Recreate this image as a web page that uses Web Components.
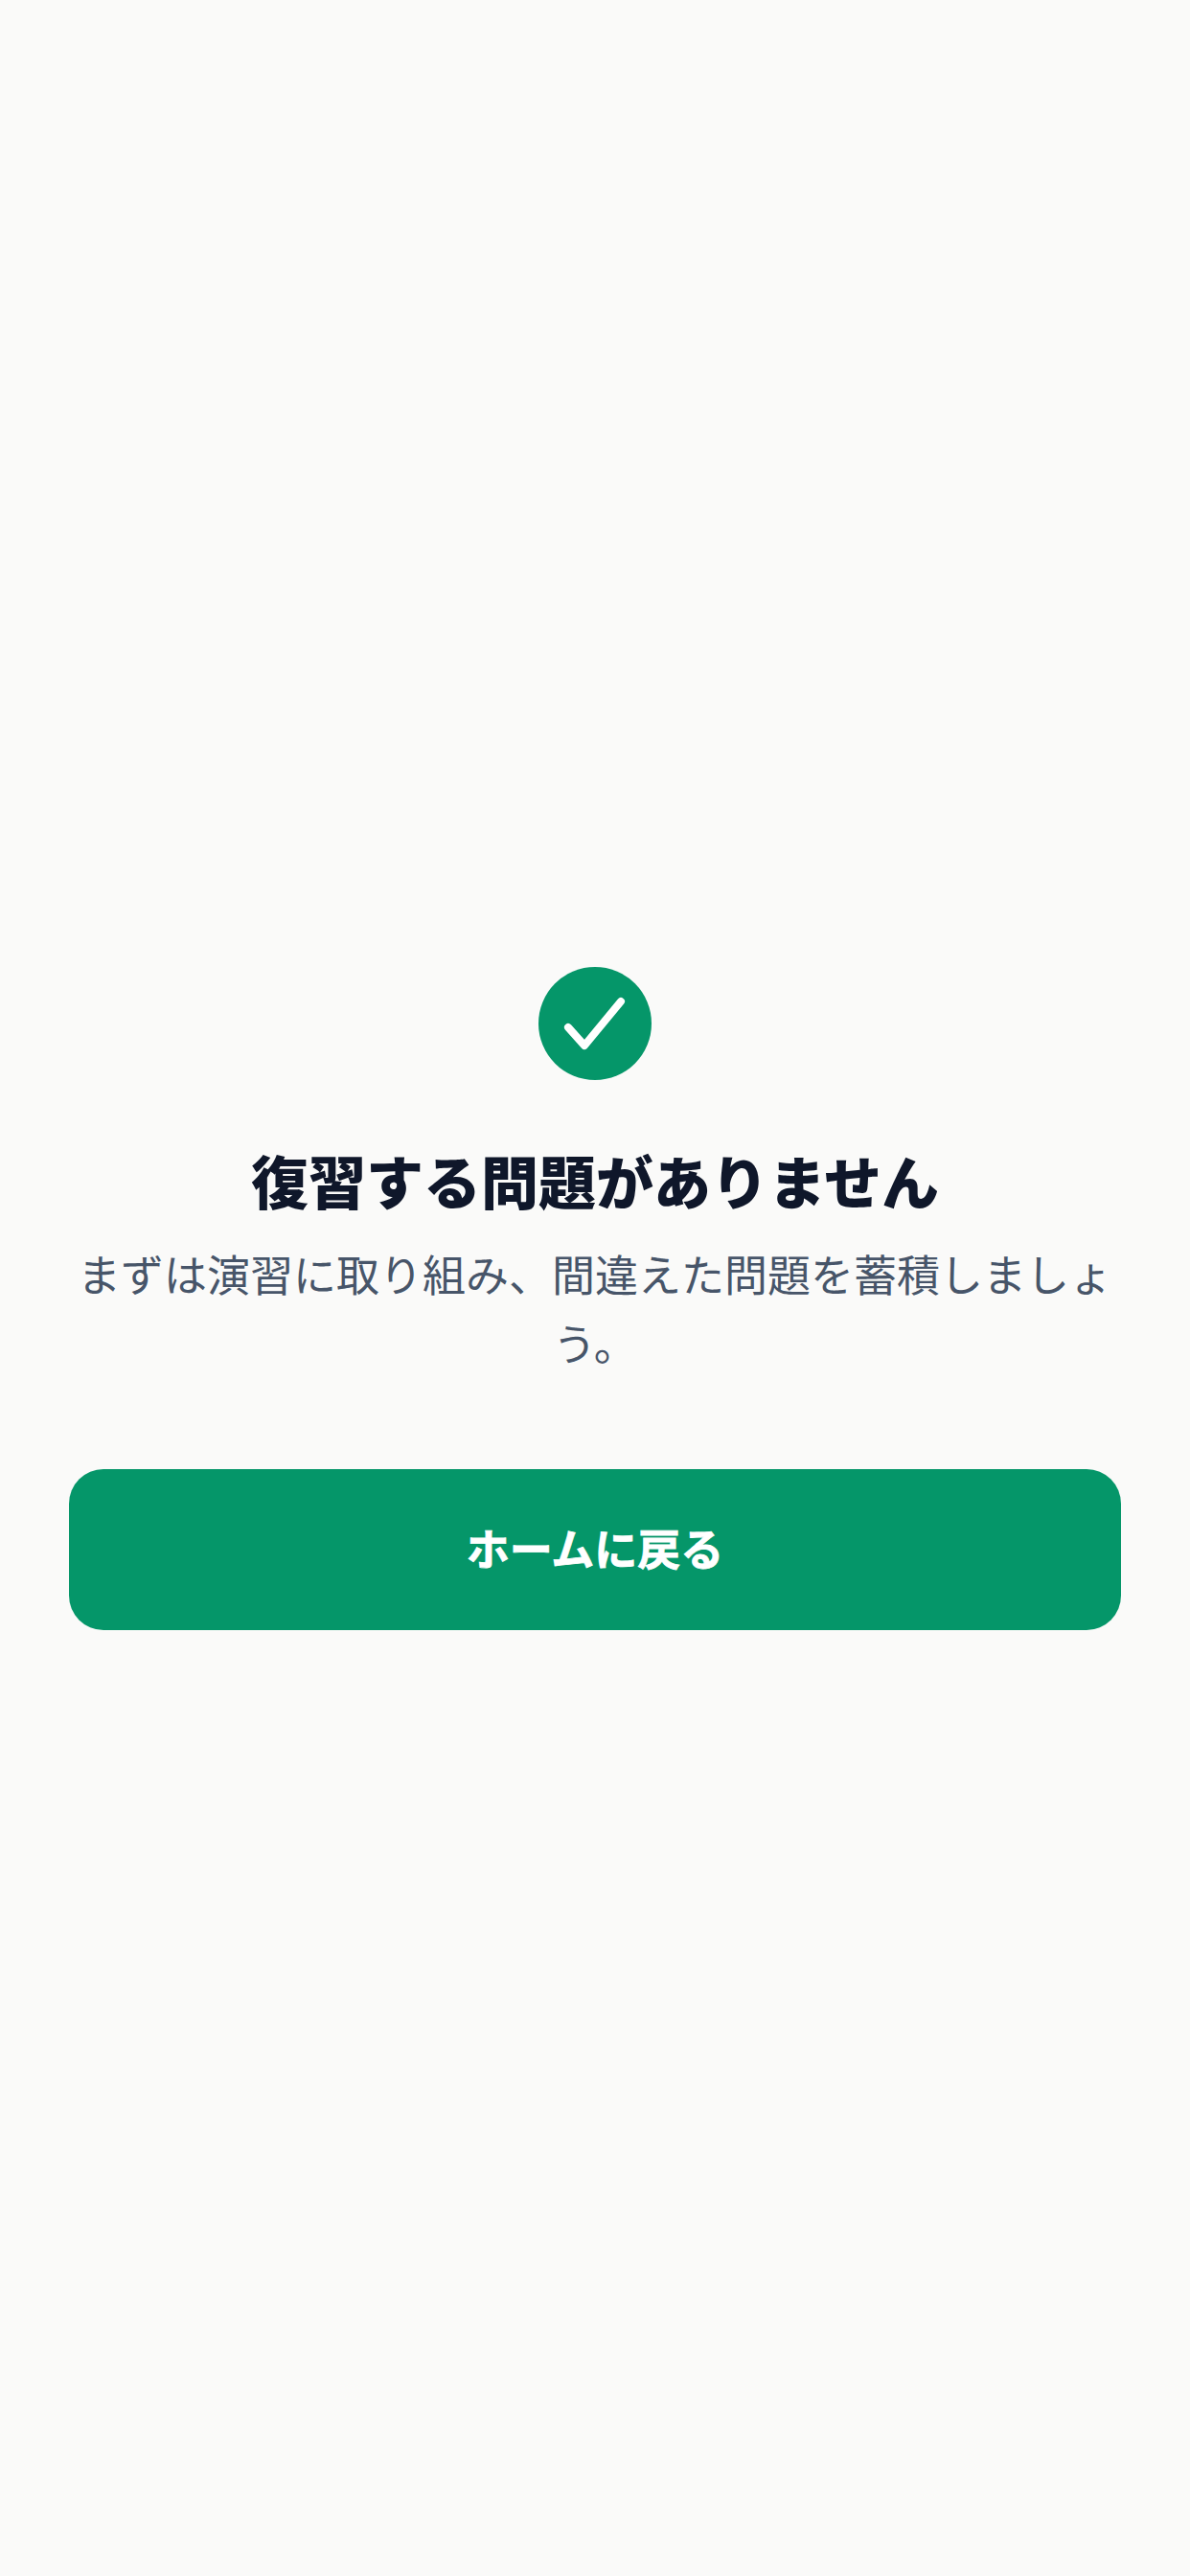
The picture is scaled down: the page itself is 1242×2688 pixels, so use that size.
<!DOCTYPE html>
<html lang="ja"><head><meta charset="utf-8"><style>
html,body{margin:0;padding:0;background:#fafaf9;height:100%}
body{font-family:"Noto Sans CJK JP","Noto Sans",sans-serif}
</style></head><body>
<empty-state heading="復習する問題がありません" message="まずは演習に取り組み、間違えた問題を蓄積しましょう。" action="ホームに戻る"></empty-state>
<script>
class CheckBadge extends HTMLElement{constructor(){super();this.attachShadow({mode:'open'}).innerHTML=`<style>:host{display:block;width:118px;height:118px}svg{display:block;width:100%;height:100%}</style><svg viewBox="0 0 118 118"><circle cx="59" cy="59" r="59" fill="#059669"/><path d="M31 63 L48 82 L86 36" fill="none" stroke="#fff" stroke-width="8" stroke-linecap="round" stroke-linejoin="round"/></svg>`}}
customElements.define('check-badge',CheckBadge);
class PrimaryButton extends HTMLElement{constructor(){super();this.attachShadow({mode:'open'}).innerHTML=`<style>:host{display:flex;align-items:center;justify-content:center;align-self:stretch;box-sizing:border-box;height:168px;padding-bottom:5px;background:#059669;border-radius:36px;color:#fff;font-size:45px;font-weight:700;-webkit-text-stroke:0.8px #fff}</style><slot></slot>`}}
customElements.define('primary-button',PrimaryButton);
class EmptyState extends HTMLElement{constructor(){super();const r=this.attachShadow({mode:'open'});r.innerHTML=`<style>:host{display:flex;flex-direction:column;align-items:center;justify-content:center;box-sizing:border-box;height:2688px;padding:22px 72px 0;font-family:"Noto Sans CJK JP",sans-serif}
h1{margin:68px 0 0;font-size:60px;line-height:72px;font-weight:900;color:#0f172a;text-align:center}
p{margin:26px 0 0;font-size:45px;line-height:72px;color:#475569;text-align:center}
primary-button{margin-top:96px}</style><check-badge></check-badge><h1></h1><p></p><primary-button></primary-button>`;
r.querySelector('h1').textContent=this.getAttribute('heading');r.querySelector('p').textContent=this.getAttribute('message');r.querySelector('primary-button').textContent=this.getAttribute('action')}}
customElements.define('empty-state',EmptyState);
</script></body></html>
